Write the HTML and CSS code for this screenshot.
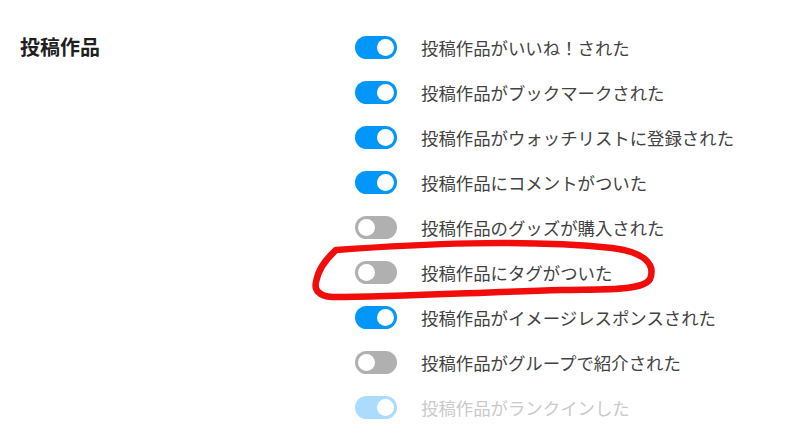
FILE: index.html
```html
<html lang="ja">
<head>
    <meta charset="UTF-8">
    <meta name="viewport" content="width=device-width, initial-scale=1.0">
    <title>通知設定</title>
    <link rel="stylesheet" href="styles.css">
</head>
<body>
    <div class="setting-section">
        <div class="section-title">投稿作品</div>
        <div class="setting-list">
            <div class="setting-row"><span class="toggle on"></span><span class="label">投稿作品がいいね！された</span></div>
            <div class="setting-row"><span class="toggle on"></span><span class="label">投稿作品がブックマークされた</span></div>
            <div class="setting-row"><span class="toggle on"></span><span class="label">投稿作品がウォッチリストに登録された</span></div>
            <div class="setting-row"><span class="toggle on"></span><span class="label">投稿作品にコメントがついた</span></div>
            <div class="setting-row"><span class="toggle"></span><span class="label">投稿作品のグッズが購入された</span></div>
            <div class="setting-row"><span class="toggle"></span><span class="label">投稿作品にタグがついた</span></div>
            <div class="setting-row"><span class="toggle on"></span><span class="label">投稿作品がイメージレスポンスされた</span></div>
            <div class="setting-row"><span class="toggle"></span><span class="label">投稿作品がグループで紹介された</span></div>
            <div class="setting-row disabled"><span class="toggle on"></span><span class="label">投稿作品がランクインした</span></div>
        </div>
    </div>

    <!-- hand drawn marker -->
    <svg class="marker" width="809" height="435" viewBox="0 0 809 435">
        <path d="M 336 250 C 420 244, 520 239, 612 248 C 644 252, 656 264, 650 279 C 643 291, 604 289, 562 290 C 482 292, 400 297, 332 297 C 319 296, 314 290, 316 282 C 318 270, 324 261, 336 250 Z"
              fill="none" stroke="#f20d0d" stroke-width="6.5" stroke-linejoin="round"/>
    </svg>
</body>
</html>
```

FILE: styles.css
```css
body {
    margin: 0px;
    background-color: white;
    font-family: "Noto Sans CJK JP", "Noto Sans", sans-serif;
}

.setting-section {
    display: flex;
    padding: 25px 0px 0px 20px;
}

.section-title {
    width: 335px;
    height: 45px;
    line-height: 44px;
    font-size: 20px;
    font-weight: bold;
    color: #1f1f1f;
}

.setting-list {
    display: flex;
    flex-direction: column;
}

.setting-row {
    height: 45px;
    display: flex;
    align-items: center;
    gap: 24px;
}

.label {
    font-size: 17.4px;
    line-height: 22px;
    color: #424242;
}

.toggle {
    width: 42px;
    height: 23px;
    border-radius: 12px;
    background-color: #b0b0b0;
    box-sizing: border-box;
    padding: 3px;
    display: flex;
}
.toggle::after {
    content: "";
    width: 17px;
    height: 17px;
    border-radius: 50%;
    background-color: white;
}
.toggle.on {
    background-color: #0096fa;
    justify-content: flex-end;
}

.setting-row.disabled .toggle {
    background-color: #abdcfe;
}
.setting-row.disabled .label {
    color: #cacaca;
}

.marker {
    position: absolute;
    left: 0px;
    top: 0px;
    pointer-events: none;
}
```
